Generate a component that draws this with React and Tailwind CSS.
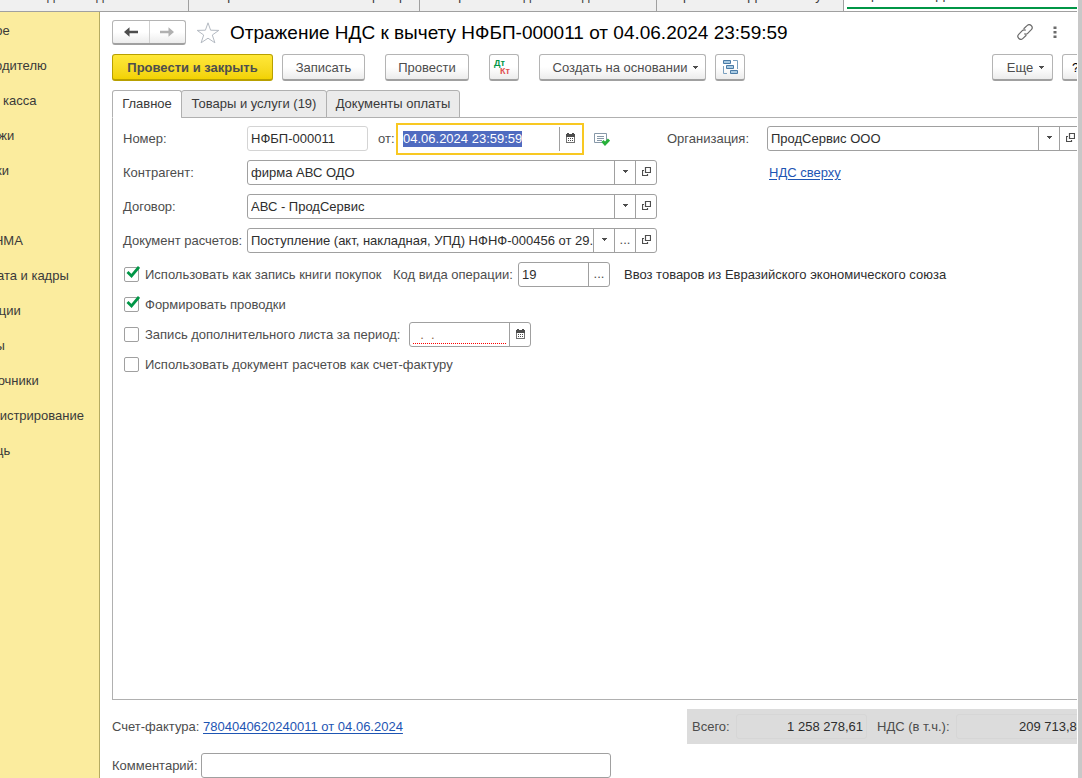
import React, { useEffect, useRef, useState } from "react";

const sections = [
  "Главное",
  "Руководителю",
  "Банк и касса",
  "Продажи",
  "Покупки",
  "Склад",
  "ОС и НМА",
  "Зарплата и кадры",
  "Операции",
  "Отчеты",
  "Справочники",
  "Администрирование",
  "Помощь",
];

const windows = [
  { title: "Накладная выдачи", width: "w-[189px]" },
  { title: "Товары в наличии и остатки резерв", width: "w-[231px]" },
  { title: "Товары на складе в выходные", width: "w-[237px]" },
  { title: "Отражение НДС к вычету", width: "w-[187px]" },
];

const tabs = [
  { title: "Главное", width: "w-[70px]" },
  { title: "Товары и услуги (19)", width: "w-[146px]" },
  { title: "Документы оплаты", width: "w-[134px]" },
];

function CaretIcon() {
  return (
    <svg width="5" height="3" viewBox="0 0 5 3" fill="currentColor" aria-hidden="true">
      <path d="M0 0h5v1H4v1H3v1H2V2H1V1H0z" />
    </svg>
  );
}

function OpenIcon() {
  return (
    <svg width="9" height="9" viewBox="0 0 9 9" fill="none" stroke="currentColor" aria-hidden="true">
      <path d="M3.500 0.500h5v5h-5z" strokeWidth="1.200" />
      <path d="M2 3.500H0.500v5h5V7" strokeWidth="1.200" />
    </svg>
  );
}

function CalendarIcon() {
  return (
    <svg width="9" height="10" viewBox="0 0 9 10" fill="currentColor" aria-hidden="true">
      <path d="M1 0h2v1h3V0h2v1h1v3H0V1h1z" />
      <path d="M0 4h1v5h7V4h1v6H0z" opacity="0.800" />
      <path d="M2 5h1v1H2zM4 5h1v1H4zM6 5h1v1H6zM2 7h1v1H2zM4 7h1v1H4zM6 7h1v1H6z" />
    </svg>
  );
}

function ArrowIcon({ className }) {
  return (
    <svg width="14" height="10" viewBox="0 0 14 10" className={className} aria-hidden="true">
      <path d="M0 5 5.500 0.200V3.700H14V6.300H5.500V9.800z" fill="currentColor" />
    </svg>
  );
}

function StarIcon() {
  return (
    <svg width="24" height="22" viewBox="0 0 24 22" fill="none" stroke="#b4bac2" aria-hidden="true">
      <path d="M12 0.800 14.600 8.200 22.800 8.400 16.300 13 18.900 20.800 12 16.200 5.100 20.800 7.700 13 1.200 8.400 9.400 8.200z" />
    </svg>
  );
}

function LinkIcon() {
  return (
    <svg width="16" height="16" viewBox="0 0 16 16" fill="none" stroke="#6b6b6b" strokeWidth="1.200" strokeLinecap="round" aria-hidden="true">
      <path d="M7 4.500 10 1.700a2.600 2.600 0 0 1 4.300 4l-3.600 3.700a2.600 2.600 0 0 1-3 .5" />
      <path d="M9 11.500 6 14.300a2.600 2.600 0 0 1-4.300-4L5.300 6.600a2.600 2.600 0 0 1 3-.5" />
    </svg>
  );
}

function StructureIcon() {
  return (
    <svg width="15" height="15" viewBox="0 0 15 15" fill="#a9cbe3" stroke="#4a7ba6" aria-hidden="true">
      <path d="M0.500 0.500h7v3h-7zM3.500 5.500h7v3h-7zM7.500 10.500h7v3h-7z" />
      <path d="M10 0.500h4.500V9M4 13.500H0.500V6" fill="none" stroke="#7aa0bf" />
    </svg>
  );
}

function PostedIcon() {
  return (
    <svg width="16" height="13" viewBox="0 0 16 13" fill="none" aria-hidden="true">
      <path d="M0.500 0.500h12v9h-12z" stroke="#8798a8" />
      <path d="M3 3.500h7M3 5.500h7M3 7.500h5" stroke="#8798a8" />
      <path d="M8.500 8 11 10.800 15 6.500" stroke="#27b03a" strokeWidth="3" />
    </svg>
  );
}

function Button({ children, className = "", ...rest }) {
  return (
    <button
      type="button"
      className={`flex h-[27px] items-center justify-center rounded-[3px] border border-b-2 border-[#b4b4b4] border-b-[#a0a0a0] bg-linear-to-b from-white from-50% to-[#ececec] text-[#4d4d4d] ${className}`}
      {...rest}
    >
      {children}
    </button>
  );
}

function Cell({ label, children }) {
  return (
    <button type="button" aria-label={label} className="flex w-[21px] shrink-0 items-center justify-center border-l border-[#a0a0a0] pb-0.5 text-[#4d4d4d]">
      {children}
    </button>
  );
}

function Field({ id, value, label, className = "", inputClass = "", children }) {
  return (
    <div className={`flex h-[25px] overflow-hidden rounded-[3px] border border-[#a0a0a0] bg-white ${className}`}>
      <input
        id={id}
        aria-label={label}
        defaultValue={value}
        className={`min-w-0 flex-1 pl-[3px] text-[#2e2e2e] outline-none ${inputClass}`}
      />
      {children}
    </div>
  );
}

function Row({ id, label, children }) {
  return (
    <div className="flex h-[25px] items-center">
      <label htmlFor={id} className="w-[124px] shrink-0">{label}</label>
      {children}
    </div>
  );
}

function Check({ label, checked, className = "" }) {
  return (
    <label className={`flex shrink-0 items-center gap-1.5 pl-px ${className}`}>
      <span className="relative flex">
        <input type="checkbox" defaultChecked={checked} className="peer size-[15px] appearance-none rounded-[2px] border border-[#a0a0a0] bg-white" />
        <svg width="14" height="13" viewBox="0 0 14 13" fill="none" className="pointer-events-none absolute -top-px left-0.5 hidden peer-checked:block" aria-hidden="true">
          <path d="M1.500 6 5.500 10 13 1" stroke="#009646" strokeWidth="2.800" />
        </svg>
      </span>
      {label}
    </label>
  );
}

function Sidebar() {
  return (
    <nav className="w-[100px] shrink-0 overflow-hidden border-r border-[#b5ab62] bg-[#fbec9e]">
      <div className="-ml-10 flex flex-col pt-px">
        {sections.map((name) => (
          <a key={name} href="#" className="h-[35px] leading-[35px] whitespace-nowrap text-[#3a3a3a]">
            {name}
          </a>
        ))}
      </div>
    </nav>
  );
}

function WindowTabs() {
  return (
    <div className="-mt-5 flex h-8 shrink-0 border-b border-[#a0a0a0] bg-[#f0f0f0] leading-[30px] text-[#3a3a3a]">
      {windows.map((w) => (
        <button key={w.title} type="button" className={`shrink-0 overflow-hidden border-r border-[#a0a0a0] pl-2.5 text-left whitespace-nowrap ${w.width}`}>
          {w.title}
        </button>
      ))}
      <button type="button" className="flex min-w-0 flex-1 overflow-hidden bg-white pl-[3px] text-left whitespace-nowrap">
        <span className="h-[29px] flex-1 border-b-2 border-[#009646] pl-2 leading-[30px]">Отражение НДС</span>
      </button>
    </div>
  );
}

function MainTab() {
  const dateRef = useRef(null);

  useEffect(() => {
    dateRef.current.focus();
    dateRef.current.select();
  }, []);

  return (
    <div className="flex flex-1 flex-col border border-[#b0b0b0] pt-2 pr-[7px] pl-2.5">
      <div className="flex gap-2.5">
        <div className="flex w-[534px] shrink-0 flex-col gap-[9px]">
          <Row id="number" label="Номер:">
            <Field id="number" value="НФБП-000011" className="w-[121px] border-[#d4d4d4]" />
            <label htmlFor="date" className="ml-2.5 w-[18px]">от:</label>
            <div className="flex h-8 w-[188px] shrink-0 items-center border-2 border-[#f8c822] bg-white">
              <input
                id="date"
                ref={dateRef}
                defaultValue="04.06.2024 23:59:59"
                className="min-w-0 flex-1 pl-[5px] text-[#2e2e2e] outline-none selection:bg-[#4f6bc0] selection:text-white"
              />
              <button type="button" aria-label="Выбрать дату" className="flex h-6 w-[23px] items-center justify-center border-l border-[#a0a0a0] pr-0.5 pb-0.5 text-[#4d4d4d]">
                <CalendarIcon />
              </button>
            </div>
            <span className="ml-2.5 pt-0.5"><PostedIcon /></span>
          </Row>
          <Row id="partner" label="Контрагент:">
            <Field id="partner" value="фирма АВС ОДО" className="flex-1">
              <Cell label="Выбрать"><CaretIcon /></Cell>
              <Cell label="Открыть"><OpenIcon /></Cell>
            </Field>
          </Row>
          <Row id="contract" label="Договор:">
            <Field id="contract" value="АВС - ПродСервис" className="flex-1">
              <Cell label="Выбрать"><CaretIcon /></Cell>
              <Cell label="Открыть"><OpenIcon /></Cell>
            </Field>
          </Row>
          <Row id="settlement" label="Документ расчетов:">
            <Field id="settlement" value="Поступление (акт, накладная, УПД) НФНФ-000456 от 29.03.2024" className="flex-1">
              <Cell label="Выбрать"><CaretIcon /></Cell>
              <Cell label="Показать все">...</Cell>
              <Cell label="Открыть"><OpenIcon /></Cell>
            </Field>
          </Row>
        </div>
        <div className="flex min-w-0 flex-1 flex-col gap-[9px]">
          <div className="flex h-[25px] items-center">
            <label htmlFor="company" className="w-[100px] shrink-0">Организация:</label>
            <Field id="company" value="ПродСервис ООО" className="flex-1">
              <Cell label="Выбрать"><CaretIcon /></Cell>
              <Cell label="Открыть"><OpenIcon /></Cell>
            </Field>
          </div>
          <div className="flex h-[25px] items-center pl-[102px]">
            <a href="#" className="text-[#1e55b3] underline underline-offset-2">НДС сверху</a>
          </div>
        </div>
      </div>

      <div className="mt-[9px] flex flex-col gap-[5px] whitespace-nowrap">
        <div className="flex h-[25px] items-center">
          <Check label="Использовать как запись книги покупок" checked className="w-[270px]" />
          <label htmlFor="code" className="w-[125px] shrink-0">Код вида операции:</label>
          <Field id="code" value="19" className="w-[92px]">
            <Cell label="Выбрать код">...</Cell>
          </Field>
          <span className="ml-3.5 text-[#2e2e2e]">Ввоз товаров из Евразийского экономического союза</span>
        </div>
        <div className="flex h-[25px] items-center">
          <Check label="Формировать проводки" checked />
        </div>
        <div className="flex h-[25px] items-center">
          <Check label="Запись дополнительного листа за период:" className="w-[286px]" />
          <div className="flex h-[25px] w-[122px] overflow-hidden rounded-[3px] border border-[#a0a0a0] bg-white">
            <input
              aria-label="Период дополнительного листа"
              defaultValue="  .  ."
              className="mx-[3px] mb-0.5 min-w-0 flex-1 border-b border-dotted border-[#ff0000] pt-1 text-[#8a6a4a] outline-none"
            />
            <Cell label="Выбрать период"><CalendarIcon /></Cell>
          </div>
        </div>
        <div className="flex h-[25px] items-center">
          <Check label="Использовать документ расчетов как счет-фактуру" />
        </div>
      </div>
    </div>
  );
}

function App() {
  const [active, setActive] = useState(0);

  return (
    <div className="flex min-h-screen overflow-hidden bg-white font-['Liberation_Sans',Arial,sans-serif] text-[13px] leading-4 text-[#4d4d4d]">
      <div className="flex min-w-0 flex-1 flex-col overflow-hidden">
        <WindowTabs />
        <div className="flex flex-1">
          <Sidebar />
          <main className="flex min-w-0 flex-1 flex-col overflow-hidden pt-2 pl-3">
            <div className="-mr-3 flex flex-1 flex-col gap-[9px]">
              <header className="flex h-[25px] items-center">
                <div className="flex h-[25px] w-[74px] rounded-[3px] border border-b-2 border-[#b4b4b4] border-b-[#a0a0a0] bg-linear-to-b from-white from-50% to-[#ececec]">
                  <button type="button" aria-label="Назад" className="flex flex-1 items-center justify-center border-r border-[#d0d0d0] text-[#4d4d4d]">
                    <ArrowIcon />
                  </button>
                  <button type="button" aria-label="Вперед" className="flex flex-1 items-center justify-center text-[#b0b0b0]">
                    <ArrowIcon className="rotate-180" />
                  </button>
                </div>
                <button type="button" aria-label="В избранное" className="ml-2.5"><StarIcon /></button>
                <h1 className="ml-2.5 flex-1 text-[19px] leading-6 whitespace-nowrap text-black">
                  Отражение НДС к вычету НФБП-000011 от 04.06.2024 23:59:59
                </h1>
                <button type="button" aria-label="Ссылка" className="pb-0.5"><LinkIcon /></button>
                <button type="button" aria-label="Меню" className="mr-8 ml-5 pb-0.5">
                  <svg width="4" height="14" viewBox="0 0 4 14" fill="#6b6b6b" aria-hidden="true">
                    <path d="M0.500 1.500h3v2.500h-3zM0.500 6h3v2.500h-3zM0.500 10.500h3v2.500h-3z" />
                  </svg>
                </button>
              </header>

              <div className="flex items-center whitespace-nowrap">
                <button type="button" className="flex h-[27px] w-[161px] items-center justify-center rounded-[3px] border border-b-2 border-[#b8a000] bg-linear-to-b from-[#ffe838] to-[#f2d200] pt-px font-bold text-[#4d4d4d]">
                  Провести и закрыть
                </button>
                <Button className="ml-[9px] w-[83px] pt-px">Записать</Button>
                <Button className="ml-5 w-[84px] pt-px">Провести</Button>
                <Button aria-label="Проводки" className="ml-5 w-[30px] pr-1">
                  <span className="flex flex-col text-left text-[9px] leading-[8px] font-bold">
                    <span className="text-[#009646]">Дт</span>
                    <span className="pl-1.5 text-[#e05050]">Кт</span>
                  </span>
                </Button>
                <Button className="ml-5 w-[167px] gap-1.5 pt-px pl-1.5">
                  Создать на основании <CaretIcon />
                </Button>
                <Button aria-label="Структура подчиненности" className="ml-[9px] w-[30px]">
                  <StructureIcon />
                </Button>
                <Button className="ml-auto w-[61px] gap-1.5 pt-px pl-1.5">
                  Еще <CaretIcon />
                </Button>
                <Button className="ml-[9px] w-[27px] pt-px text-black">?</Button>
              </div>

              <div className="flex flex-1 flex-col">
                <div className="z-10 -mb-px flex" role="tablist">
                  {tabs.map((tab, i) => (
                    <button
                      key={tab.title}
                      type="button"
                      role="tab"
                      aria-selected={i === active}
                      onClick={() => setActive(i)}
                      className={`-mr-px h-7 rounded-t-[3px] border border-[#b0b0b0] text-[#3a3a3a] last:mr-0 ${tab.width} ${
                        i === active ? "border-b-white bg-white" : "bg-[#ebebeb]"
                      }`}
                    >
                      {tab.title}
                    </button>
                  ))}
                </div>
                <MainTab />
              </div>

              <footer className="flex flex-col gap-[9px] whitespace-nowrap">
                <div className="flex h-[35px] items-center">
                  <span className="w-[91px]">Счет-фактура:</span>
                  <a href="#" className="text-[#1e55b3] underline underline-offset-2">7804040620240011 от 04.06.2024</a>
                  <div className="ml-auto flex h-[35px] w-[402px] shrink-0 items-center bg-[#dcdcdc] pl-[5px]">
                    <label htmlFor="total" className="w-11">Всего:</label>
                    <input id="total" readOnly defaultValue="1 258 278,61" className="h-[25px] w-[131px] rounded-[3px] border border-[#d6d6d6] pr-[3px] text-right text-[#2e2e2e]" />
                    <label htmlFor="vat" className="ml-2.5 w-[79px]">НДС (в т.ч.):</label>
                    <input id="vat" readOnly defaultValue="209 713,80" className="h-[25px] w-[131px] rounded-[3px] border border-[#d6d6d6] pr-0.5 text-right text-[#2e2e2e]" />
                  </div>
                </div>
                <div className="flex items-center">
                  <label htmlFor="comment" className="w-[89px]">Комментарий:</label>
                  <Field id="comment" className="w-[410px]" />
                </div>
              </footer>
            </div>
          </main>
        </div>
      </div>
      <div className="ml-px w-1 shrink-0 bg-[#c8c8c8]" />
    </div>
  );
}

export default App;
